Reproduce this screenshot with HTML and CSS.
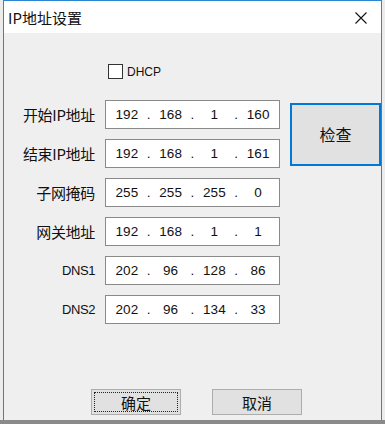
FILE: index.html
```html
<!DOCTYPE html>
<html lang="zh">
	<head>
		<meta charset="utf-8">
		<title>IP地址设置</title>
		<link rel="stylesheet" href="styles.css">
	</head>
	<body>
		<div class="window">
			<div class="titlebar">
				<span class="title">IP地址设置</span>
				<svg class="close" width="12" height="12" viewBox="0 0 12 12">
					<path d="M0.5 0.5 L11.5 11.5 M11.5 0.5 L0.5 11.5" stroke="#111" stroke-width="1.1" fill="none"/>
				</svg>
			</div>
			<div class="client">
				<label class="dhcp"><span class="box"></span>DHCP</label>
				<div class="form">
					<span class="lbl">开始IP地址</span>
					<div class="ip"><span>192</span><i>.</i><span>168</span><i>.</i><span>1</span><i>.</i><span>160</span></div>
					<button class="check">检查</button>
					<span class="lbl">结束IP地址</span>
					<div class="ip"><span>192</span><i>.</i><span>168</span><i>.</i><span>1</span><i>.</i><span>161</span></div>
					<span class="lbl">子网掩码</span>
					<div class="ip"><span>255</span><i>.</i><span>255</span><i>.</i><span>255</span><i>.</i><span>0</span></div>
					<span class="lbl">网关地址</span>
					<div class="ip"><span>192</span><i>.</i><span>168</span><i>.</i><span>1</span><i>.</i><span>1</span></div>
					<span class="lbl latin">DNS1</span>
					<div class="ip"><span>202</span><i>.</i><span>96</span><i>.</i><span>128</span><i>.</i><span>86</span></div>
					<span class="lbl latin">DNS2</span>
					<div class="ip"><span>202</span><i>.</i><span>96</span><i>.</i><span>134</span><i>.</i><span>33</span></div>
				</div>
				<div class="footer">
					<button class="btn focus"><span>确定</span></button>
					<button class="btn"><span>取消</span></button>
				</div>
			</div>
		</div>
		<div class="taskbar"></div>
	</body>
</html>
```

FILE: styles.css
```css
html, body{
	margin: 0;
	padding: 0;
}
body{
	width: 385px;
	height: 424px;
	overflow: hidden;
	background-color: #ececec;
	font-family: "Noto Sans CJK SC", "Liberation Sans", sans-serif;
	color: #111;
}
.window{
	margin-left: 3px;
	width: 377px;
	height: 419px;
	border: 1px solid #2b86d4;
	border-bottom: none;
	background-color: #f0eff0;
	display: flex;
	flex-direction: column;
}
.titlebar{
	height: 32px;
	background-color: white;
	display: flex;
	align-items: center;
	padding-left: 4px;
	padding-right: 14px;
}
.title{
	font-size: 15px;
	line-height: 1;
	flex: 1;
	margin-top: 1px;
}
.close{
	display: block;
	margin-top: 2px;
}
.client{
	flex: 1;
	display: flex;
	flex-direction: column;
}
.dhcp{
	display: flex;
	align-items: center;
	margin-top: 31px;
	margin-left: 104px;
	font-family: "Liberation Sans", sans-serif;
	font-size: 12px;
	height: 15px;
}
.box{
	width: 13px;
	height: 13px;
	border: 1px solid #333;
	background-color: white;
	margin-right: 4px;
}
.form{
	display: grid;
	grid-template-columns: 91px 175px 90px;
	grid-auto-rows: 29px;
	column-gap: 10px;
	row-gap: 10px;
	margin-top: 21px;
}
.lbl{
	grid-column: 1;
	justify-self: end;
	align-self: center;
	font-size: 15px;
	line-height: 1;
	letter-spacing: -0.3px;
}
.lbl.latin{
	font-family: "Liberation Sans", sans-serif;
	font-size: 13px;
	letter-spacing: -0.4px;
}
.ip{
	grid-column: 2;
	display: flex;
	align-items: center;
	border: 1px solid #8a8a8a;
	background-color: white;
	padding: 0 1px;
	font-family: "Liberation Sans", sans-serif;
	font-size: 13.5px;
}
.ip span{
	flex: 1;
	text-align: center;
}
.ip i{
	font-style: normal;
	width: 4px;
	text-align: center;
}
.check{
	grid-column: 3;
	grid-row: 1 / span 2;
	align-self: center;
	height: 63px;
	margin-right: -1px;
	background-color: #e1e1e1;
	border: 2px solid #0078d7;
	font-family: inherit;
	font-size: 16px;
	color: #111;
	padding: 0;
}
.footer{
	margin-top: auto;
	display: flex;
	gap: 31px;
	padding-left: 87px;
	padding-bottom: 5px;
}
.btn{
	width: 90px;
	height: 26px;
	padding: 2px;
	background-color: #e1e1e1;
	border: 1px solid #adadad;
	font-family: inherit;
	font-size: 15px;
	color: #111;
	display: flex;
}
.btn span{
	flex: 1;
	display: flex;
	align-items: center;
	justify-content: center;
	border: 1px dotted transparent;
}
.btn.focus span{
	border-color: #222;
}
.taskbar{
	height: 5px;
	background-color: #8a8a8a;
}
```
